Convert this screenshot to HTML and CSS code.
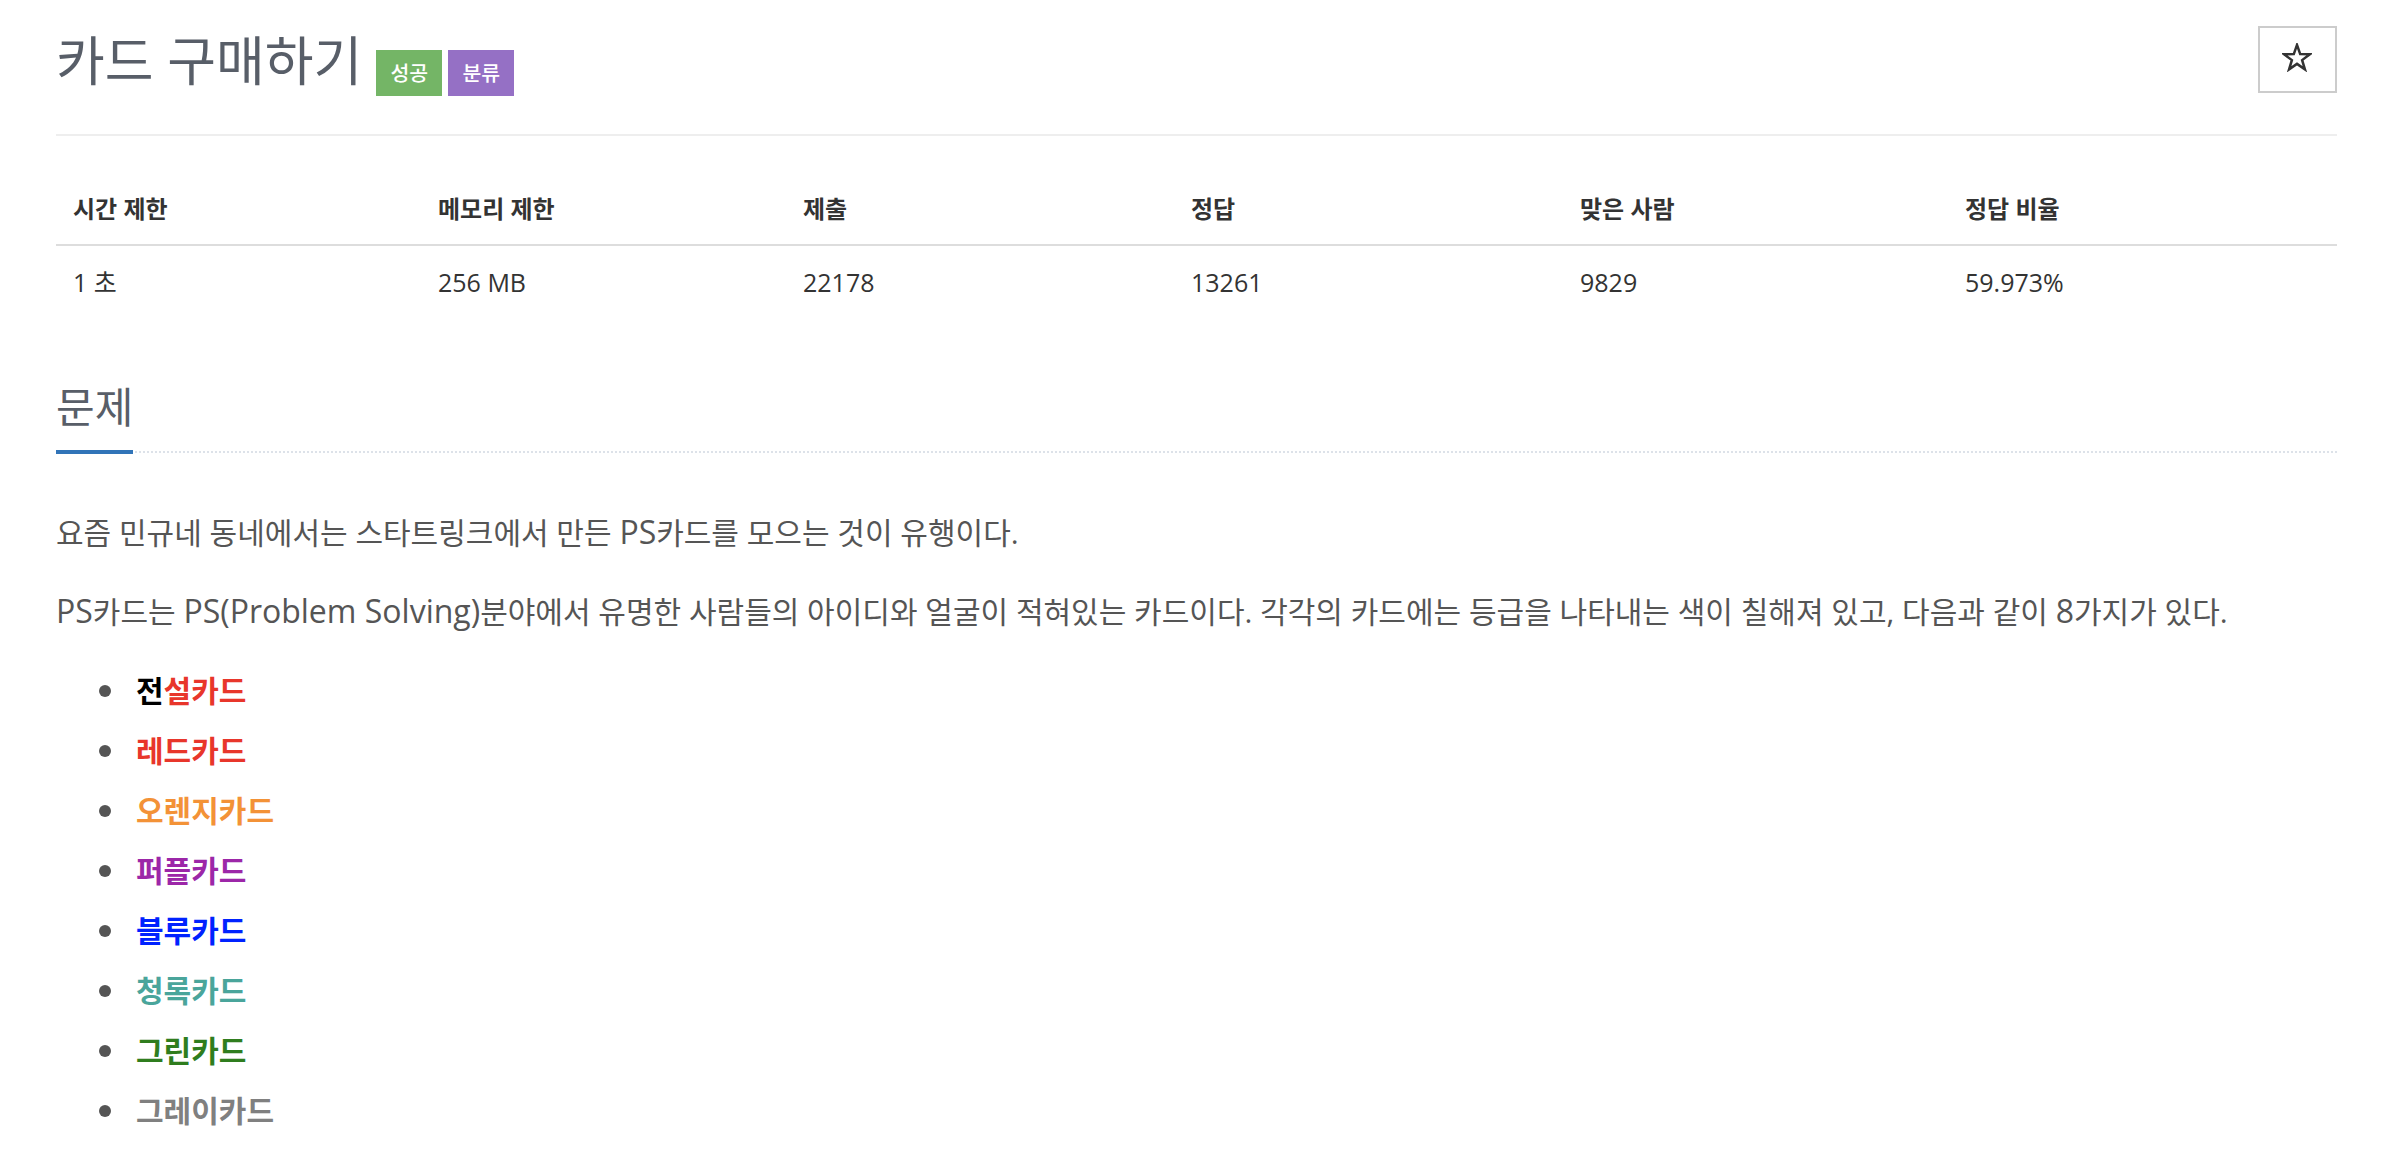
FILE: index.html
```html
<!DOCTYPE html>
<html lang="ko">
<head>
<meta charset="utf-8">
<title>카드 구매하기</title>
<link rel="stylesheet" href="styles.css">
</head>
<body>
<div class="container">
  <header class="page-header">
    <h1 class="title">
      <span class="title-text">카드 구매하기</span>
      <span class="label label-success">성공</span>
      <span class="label label-tag">분류</span>
    </h1>
    <button class="star-btn" type="button" aria-label="즐겨찾기">
      <svg width="30" height="29" viewBox="-1.5 -1.5 31 30">
        <polygon points="14,0.5 17.3,10 27.3,10.2 19.3,16.2 22.2,25.8 14,20.1 5.8,25.8 8.7,16.2 0.7,10.2 10.7,10" fill="none" stroke="#333" stroke-width="2.6" stroke-linejoin="miter"/>
      </svg>
    </button>
  </header>

  <table class="info-table">
    <colgroup>
      <col class="c1"><col class="c2"><col class="c3"><col class="c4"><col class="c5"><col class="c6">
    </colgroup>
    <thead>
      <tr><th>시간 제한</th><th>메모리 제한</th><th>제출</th><th>정답</th><th>맞은 사람</th><th>정답 비율</th></tr>
    </thead>
    <tbody>
      <tr><td>1 초</td><td>256 MB</td><td>22178</td><td>13261</td><td>9829</td><td>59.973%</td></tr>
    </tbody>
  </table>

  <section class="problem">
    <div class="headline"><h2>문제</h2></div>
    <div class="description">
      <p>요즘 민규네 동네에서는 스타트링크에서 만든 <span class="en">PS</span>카드를 모으는 것이 유행이다.</p>
      <p><span class="en">PS</span>카드는 <span class="en">PS(Problem Solving)</span>분야에서 유명한 사람들의 아이디와 얼굴이 적혀있는 카드이다. 각각의 카드에는 등급을 나타내는 색이 칠해져 있고, 다음과 같이 <span class="en">8</span>가지가 있다.</p>
      <ul class="cards">
        <li><span><span class="c-black">전</span><span class="c-red">설카드</span></span></li>
        <li><span class="c-red">레드카드</span></li>
        <li><span class="c-orange">오렌지카드</span></li>
        <li><span class="c-purple">퍼플카드</span></li>
        <li><span class="c-blue">블루카드</span></li>
        <li><span class="c-teal">청록카드</span></li>
        <li><span class="c-green">그린카드</span></li>
        <li><span class="c-gray">그레이카드</span></li>
      </ul>
    </div>
  </section>
</div>
</body>
</html>
```

FILE: styles.css
```css
html, body {
  margin: 0;
  padding: 0;
  background: #fff;
}

body {
  font-family: "Open Sans", "Noto Sans CJK KR", sans-serif;
  color: #333;
}

.container {
  margin: 0 51px 0 56px;
}

/* header */
.page-header {
  display: flex;
  justify-content: space-between;
  align-items: flex-start;
  box-sizing: border-box;
  height: 136px;
  padding-top: 26px;
  border-bottom: 2px solid #eeeeee;
}

.title {
  margin: 0;
  display: flex;
  align-items: flex-start;
  font-size: 53px;
  font-weight: 400;
  line-height: 70px;
  color: #585e68;
}

.label {
  display: flex;
  align-items: center;
  justify-content: center;
  width: 66px;
  height: 46px;
  margin-top: 24px;
  font-size: 20.5px;
  line-height: 1;
  font-weight: 500;
  color: #fff;
}

.label-success {
  margin-left: 14px;
  background: #74b566;
}

.label-tag {
  margin-left: 6px;
  background: #9570c5;
}

.star-btn {
  display: flex;
  align-items: center;
  justify-content: center;
  width: 79px;
  height: 67px;
  padding: 0;
  background: #fff;
  border: 2px solid #cccccc;
  cursor: pointer;
}

.star-btn svg {
  margin-bottom: 4px;
  margin-left: -2px;
}

/* info table */
.info-table {
  width: 100%;
  margin-top: 41px;
  border-collapse: collapse;
  table-layout: fixed;
}

.c1 { width: 365px; }
.c2 { width: 365px; }
.c3 { width: 388px; }
.c4 { width: 389px; }
.c5 { width: 385px; }
.c6 { width: auto; }

.info-table th {
  text-align: left;
  font-size: 24px;
  font-weight: 700;
  line-height: 40px;
  padding: 12px 17px 15px;
  color: #333;
  border-bottom: 2px solid #dddddd;
}

.info-table td {
  text-align: left;
  font-size: 25px;
  line-height: 48px;
  padding: 12px 17px;
  color: #333;
}

/* problem section */
.problem {
  margin-top: 64px;
}

.headline {
  border-bottom: 2px dotted #dde2e9;
}

.headline h2 {
  display: inline-block;
  margin: 0 0 -3px;
  padding-bottom: 18px;
  font-size: 42px;
  font-weight: 400;
  line-height: 50px;
  color: #585e68;
  border-bottom: 4px solid #3174b8;
}

.description {
  padding-top: 58px;
}

.description p {
  margin: 0 0 35px;
  font-size: 30px;
  line-height: 44px;
  color: #555;
}

.en {
  font-size: 32px;
  line-height: 1;
}

.cards {
  margin: 0;
  padding-left: 43px;
  list-style: none;
}

.cards li {
  display: flex;
  align-items: center;
  font-size: 30px;
  font-weight: 700;
  line-height: 44px;
  margin-bottom: 16px;
}

.cards li::before {
  content: "";
  flex: none;
  width: 12px;
  height: 12px;
  border-radius: 50%;
  background: #555;
  margin-right: 25px;
}

.c-black { color: #000; }
.c-red { color: #e8362b; }
.c-orange { color: #f39237; }
.c-purple { color: #9c27a8; }
.c-blue { color: #0022ff; }
.c-teal { color: #4aa59b; }
.c-green { color: #2f7d1e; }
.c-gray { color: #808080; }
```
